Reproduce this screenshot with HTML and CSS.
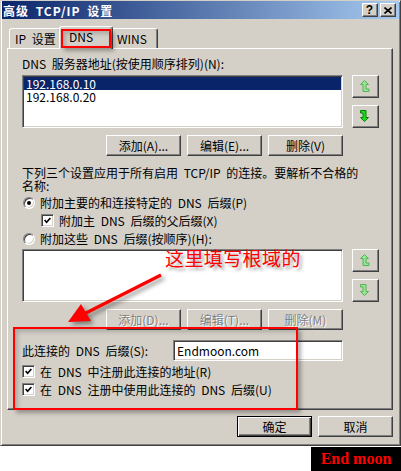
FILE: index.html
```html
<!DOCTYPE html>
<html lang="zh-CN">
<head>
<meta charset="utf-8">
<title>高级 TCP/IP 设置</title>
<link rel="stylesheet" href="styles.css">
</head>
<body>
<div class="stage">
  <div class="window">
    <div class="titlebar">
      <span class="title">高级 TCP/IP 设置</span>
      <div class="caption-btns">
        <span class="cap-btn help">?</span>
        <span class="cap-btn close">
          <svg width="8" height="7" viewBox="0 0 8 7"><path d="M0.5 0.5 L7.5 6.5 M7.5 0.5 L0.5 6.5" stroke="#000" stroke-width="1.6" fill="none"/></svg>
        </span>
      </div>
    </div>

    <div class="dlg-body">
      <div class="tabs">
        <div class="tab t-ip">IP 设置</div>
        <div class="tab t-dns active">DNS</div>
        <div class="tab t-wins">WINS</div>
      </div>

      <div class="panel">
        <div class="label">DNS 服务器地址(按使用顺序排列)(N):</div>
        <div class="list-row">
          <div class="listbox">
            <div class="item selected">192.168.0.10</div>
            <div class="item">192.168.0.20</div>
          </div>
          <div class="side">
            <div class="btn sq">
              <svg class="arrow-up dim" width="10" height="13" viewBox="0 0 10 13"><path d="M4.5 0.5 L8.5 4.5 L6 4.5 L6 9 L9 9 L9 11.5 L3 11.5 L3 4.5 L0.5 4.5 Z"/></svg>
            </div>
            <div class="btn sq">
              <svg class="arrow-down" width="10" height="13" viewBox="0 0 10 13"><path d="M0.5 0.5 L6 0.5 L6 7.5 L8.5 7.5 L4.5 11.5 L0.5 7.5 L3 7.5 L3 3 L0.5 3 Z"/></svg>
            </div>
          </div>
        </div>
        <div class="btn-row">
          <div class="btn pbtn">添加(A)...</div>
          <div class="btn pbtn">编辑(E)...</div>
          <div class="btn pbtn">删除(V)</div>
        </div>

        <div class="desc">
          <div class="line">下列三个设置应用于所有启用 TCP/IP 的连接。要解析不合格的</div>
          <div class="line">名称:</div>
        </div>

        <div class="opt radio-row">
          <span class="radio on"></span>
          <span>附加主要的和连接特定的 DNS 后缀(P)</span>
        </div>
        <div class="opt sub-row">
          <span class="chk"><svg width="7" height="7" viewBox="0 0 7 7"><path d="M0.6 3 L2.6 5.2 L6.4 1" stroke="#000" stroke-width="1.7" fill="none"/></svg></span>
          <span>附加主 DNS 后缀的父后缀(X)</span>
        </div>
        <div class="opt radio-row">
          <span class="radio"></span>
          <span>附加这些 DNS 后缀(按顺序)(H):</span>
        </div>

        <div class="list-row list-row-2">
          <div class="listbox"></div>
          <div class="side">
            <div class="btn sq">
              <svg class="arrow-up dim" width="10" height="13" viewBox="0 0 10 13"><path d="M4.5 0.5 L8.5 4.5 L6 4.5 L6 9 L9 9 L9 11.5 L3 11.5 L3 4.5 L0.5 4.5 Z"/></svg>
            </div>
            <div class="btn sq">
              <svg class="arrow-down dim" width="10" height="13" viewBox="0 0 10 13"><path d="M0.5 0.5 L6 0.5 L6 7.5 L8.5 7.5 L4.5 11.5 L0.5 7.5 L3 7.5 L3 3 L0.5 3 Z"/></svg>
            </div>
          </div>
        </div>
        <div class="btn-row">
          <div class="btn pbtn disabled">添加(D)...</div>
          <div class="btn pbtn disabled">编辑(T)...</div>
          <div class="btn pbtn disabled">删除(M)</div>
        </div>

        <div class="suffix">
          <span>此连接的 DNS 后缀(S):</span>
          <div class="textbox">Endmoon.com</div>
        </div>
        <div class="opt check-row first">
          <span class="chk"><svg width="7" height="7" viewBox="0 0 7 7"><path d="M0.6 3 L2.6 5.2 L6.4 1" stroke="#000" stroke-width="1.7" fill="none"/></svg></span>
          <span>在 DNS 中注册此连接的地址(R)</span>
        </div>
        <div class="opt check-row">
          <span class="chk"><svg width="7" height="7" viewBox="0 0 7 7"><path d="M0.6 3 L2.6 5.2 L6.4 1" stroke="#000" stroke-width="1.7" fill="none"/></svg></span>
          <span>在 DNS 注册中使用此连接的 DNS 后缀(U)</span>
        </div>
      </div>

      <div class="dlg-btns">
        <div class="btn pbtn default">确定</div>
        <div class="btn pbtn">取消</div>
      </div>
    </div>
  </div>

  <div class="footer"><span class="mark">End moon</span></div>

  <!-- red annotations drawn over the dialog -->
  <div class="note note-tab"></div>
  <div class="note note-box"></div>
  <div class="note-text">这里填写根域的</div>
  <svg class="note-arrow" width="401" height="471" viewBox="0 0 401 471">
    <line x1="161" y1="275" x2="84" y2="314" stroke="#f00" stroke-width="3.2"/>
    <polygon points="68,322 81,304 91,321" fill="#f00"/>
  </svg>
</div>
</body>
</html>
```

FILE: styles.css
```css
* { box-sizing: border-box; }

html, body {
  margin: 0;
  padding: 0;
}

body {
  background: #fff;
  width: 401px;
  height: 471px;
  overflow: hidden;
  font-family: "Noto Sans CJK SC", sans-serif;
  font-size: 12px;
  line-height: 13px;
  word-spacing: 3px;
  color: #000;
}

.stage {
  position: relative;
  width: 401px;
  height: 471px;
}

/* dialog frame */
.window {
  width: 401px;
  height: 446px;
  background: #d4d0c8;
  border: 1px solid;
  border-color: #d4d0c8 #404040 #404040 #d4d0c8;
  box-shadow: inset 1px 1px #fff, inset -1px -1px #808080;
  padding: 0 1px 1px 1px;
  display: flex;
  flex-direction: column;
}

.titlebar {
  height: 18px;
  flex: none;
  background: linear-gradient(to right, #0a246a, #a6caf0);
  display: flex;
  align-items: flex-start;
  justify-content: space-between;
}

.title {
  color: #fff;
  font-weight: bold;
  letter-spacing: 1px;
  padding: 1px 0 0 1px;
  line-height: 18px;
  white-space: nowrap;
}

.caption-btns {
  display: flex;
  gap: 2px;
  margin: 2px 3px 0 0;
}

.cap-btn {
  width: 16px;
  height: 14px;
  background: #d4d0c8;
  border: 1px solid;
  border-color: #fff #404040 #404040 #fff;
  box-shadow: inset -1px -1px #808080;
  display: flex;
  align-items: center;
  justify-content: center;
}

.help {
  font-family: "Liberation Sans", sans-serif;
  font-weight: bold;
  font-size: 12px;
  line-height: 1;
  padding-right: 1px;
}

.dlg-body {
  padding: 7px 6px 0 5px;
  display: flex;
  flex-direction: column;
}

/* tabs */
.tabs {
  display: flex;
  align-items: flex-end;
  height: 22px;
  padding-left: 2px;
}

.tab {
  height: 20px;
  border: 1px solid;
  border-bottom: 0;
  border-color: #fff #404040 transparent #fff;
  box-shadow: inset -1px 0 #808080;
  border-radius: 3px 3px 0 0;
  padding: 3px 0 0 5px;
  white-space: nowrap;
  background: #d4d0c8;
}

.t-ip { width: 52px; }
.t-wins { width: 47px; }

.t-dns {
  width: 54px;
  margin: 0 -2px -1px;
  height: 23px;
  padding-left: 9px;
  padding-top: 3px;
  position: relative;
  z-index: 1;
}

/* tab page */
.panel {
  width: 386px;
  height: 362px;
  border: 1px solid;
  border-color: #fff #404040 #404040 #fff;
  box-shadow: inset -1px -1px #808080;
  padding: 8px 0 0 14px;
}

.label, .line { white-space: nowrap; height: 13px; }

.list-row {
  display: flex;
  gap: 9px;
  margin-top: 5px;
}

.list-row-2 { margin-top: 4px; }

.listbox {
  width: 321px;
  height: 53px;
  background: #fff;
  border: 1px solid;
  border-color: #808080 #fff #fff #808080;
  box-shadow: inset 1px 1px #404040, inset -1px -1px #d4d0c8;
  padding: 1px;
}

.item {
  height: 13px;
  line-height: 13px;
  padding-left: 2px;
}

.item.selected {
  background: #0a246a;
  color: #fff;
}

.side {
  display: flex;
  flex-direction: column;
  gap: 7px;
}

.btn {
  background: #d4d0c8;
  border: 1px solid;
  border-color: #fff #404040 #404040 #fff;
  box-shadow: inset -1px -1px #808080;
  display: flex;
  align-items: center;
  justify-content: center;
  white-space: nowrap;
}

.sq {
  width: 27px;
  height: 23px;
  padding-right: 1px;
}

.arrow-up path, .arrow-down path {
  fill: #18e018;
  stroke: #0b7a0b;
  stroke-width: 1;
}

.arrow-up.dim path, .arrow-down.dim path {
  fill: #96e496;
  stroke: #52b452;
}

.btn-row {
  width: 321px;
  display: flex;
  justify-content: flex-end;
  gap: 6px;
  margin-top: 7px;
}

.pbtn {
  width: 75px;
  height: 21px;
  padding-bottom: 1px;
}

.pbtn.disabled {
  color: #808080;
  text-shadow: 1px 1px 0 #fff;
}

.desc {
  margin-top: 10px;
}

.opt {
  display: flex;
  align-items: center;
  gap: 5px;
  height: 13px;
  white-space: nowrap;
}

.radio-row {
  margin-top: 4px;
  padding-left: 1px;
}

.sub-row {
  margin-top: 5px;
  padding-left: 19px;
}

.sub-row + .radio-row { margin-top: 5px; }

.radio {
  flex: none;
  position: relative;
  width: 12px;
  height: 12px;
  border-radius: 50%;
  background: #fff;
  border: 1px solid;
  border-color: #808080 #fff #fff #808080;
  box-shadow: inset 1px 1px #404040, inset -1px -1px #d4d0c8;
}

.radio.on::after {
  content: "";
  position: absolute;
  left: 3px;
  top: 3px;
  width: 4px;
  height: 4px;
  border-radius: 50%;
  background: #000;
}

.chk {
  flex: none;
  width: 13px;
  height: 13px;
  background: #fff;
  border: 1px solid;
  border-color: #808080 #fff #fff #808080;
  box-shadow: inset 1px 1px #404040, inset -1px -1px #d4d0c8;
  display: flex;
  align-items: center;
  justify-content: center;
}

.suffix {
  width: 321px;
  display: flex;
  align-items: center;
  margin-top: 10px;
  white-space: nowrap;
}

.textbox {
  margin-left: auto;
  width: 170px;
  height: 21px;
  background: #fff;
  border: 1px solid;
  border-color: #808080 #fff #fff #808080;
  box-shadow: inset 1px 1px #404040, inset -1px -1px #d4d0c8;
  padding: 3px 0 0 3px;
  line-height: 13px;
}

.check-row { margin-top: 5px; }
.check-row.first { margin-top: 4px; }

.dlg-btns {
  width: 386px;
  display: flex;
  justify-content: flex-end;
  gap: 6px;
  margin-top: 6px;
}

.pbtn.default {
  border: 1px solid #000;
  box-shadow: inset 1px 1px #fff, inset -1px -1px #404040, inset -2px -2px #808080;
}

/* badge under the dialog */
.footer {
  display: flex;
  justify-content: flex-end;
  margin-top: 1px;
}

.mark {
  width: 90px;
  height: 24px;
  background: #000;
  color: #f00;
  font-family: "Liberation Serif", serif;
  font-weight: bold;
  font-size: 16px;
  line-height: 24px;
  word-spacing: 0;
  text-align: center;
  white-space: nowrap;
}

/* red annotations */
.note {
  position: absolute;
  border: 2px solid #f00;
  box-shadow: 3px 3px 4px rgba(0, 0, 0, 0.3), inset 3px 3px 4px rgba(0, 0, 0, 0.18);
  z-index: 5;
}

.note-tab {
  left: 61px;
  top: 29px;
  width: 50px;
  height: 19px;
}

.note-box {
  left: 13px;
  top: 327px;
  width: 285px;
  height: 83px;
}

.note-text {
  position: absolute;
  left: 165px;
  top: 246px;
  z-index: 5;
  color: #f00;
  font-size: 19px;
  line-height: 24px;
  letter-spacing: 0.4px;
  white-space: nowrap;
  text-shadow: 3px 3px 3px rgba(0, 0, 0, 0.35);
}

.note-arrow {
  position: absolute;
  left: 0;
  top: 0;
  z-index: 5;
  pointer-events: none;
  filter: drop-shadow(3px 3px 2px rgba(0, 0, 0, 0.4));
}
```
